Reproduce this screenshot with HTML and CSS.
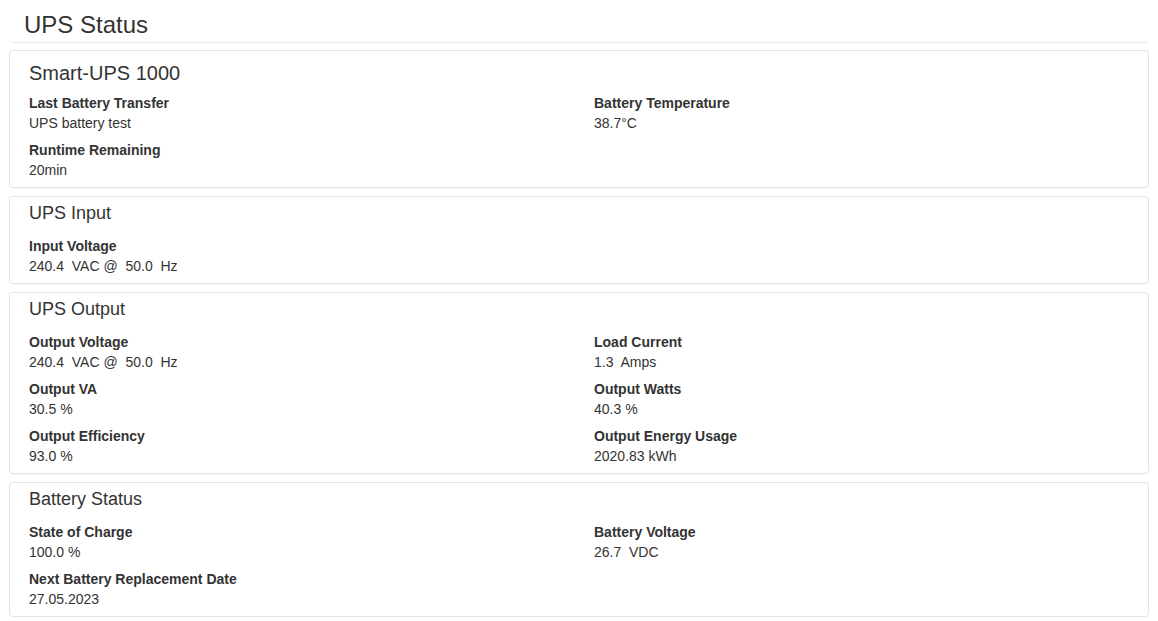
FILE: index.html
```html
<!DOCTYPE html>
<html>
<head>
<meta charset="utf-8">
<link rel="stylesheet" href="styles.css">
</head>
<body>
<div class="page">
  <div class="page-header"><h1>UPS Status</h1></div>

  <section class="card">
    <h2 class="card-title main">Smart-UPS 1000</h2>
    <div class="grid">
      <div class="item"><div class="label">Last Battery Transfer</div><div class="value">UPS battery test</div></div>
      <div class="item"><div class="label">Battery Temperature</div><div class="value">38.7°C</div></div>
      <div class="item"><div class="label">Runtime Remaining</div><div class="value">20min</div></div>
    </div>
  </section>

  <section class="card">
    <h2 class="card-title">UPS Input</h2>
    <div class="grid">
      <div class="item"><div class="label">Input Voltage</div><div class="value">240.4&nbsp; VAC @&nbsp; 50.0&nbsp; Hz</div></div>
    </div>
  </section>

  <section class="card">
    <h2 class="card-title">UPS Output</h2>
    <div class="grid">
      <div class="item"><div class="label">Output Voltage</div><div class="value">240.4&nbsp; VAC @&nbsp; 50.0&nbsp; Hz</div></div>
      <div class="item"><div class="label">Load Current</div><div class="value">1.3&nbsp; Amps</div></div>
      <div class="item"><div class="label">Output VA</div><div class="value">30.5 %</div></div>
      <div class="item"><div class="label">Output Watts</div><div class="value">40.3 %</div></div>
      <div class="item"><div class="label">Output Efficiency</div><div class="value">93.0 %</div></div>
      <div class="item"><div class="label">Output Energy Usage</div><div class="value">2020.83 kWh</div></div>
    </div>
  </section>

  <section class="card">
    <h2 class="card-title">Battery Status</h2>
    <div class="grid">
      <div class="item"><div class="label">State of Charge</div><div class="value">100.0 %</div></div>
      <div class="item"><div class="label">Battery Voltage</div><div class="value">26.7&nbsp; VDC</div></div>
      <div class="item"><div class="label">Next Battery Replacement Date</div><div class="value">27.05.2023</div></div>
    </div>
  </section>
</div>
</body>
</html>
```
FILE: styles.css
```css
html, body {
  margin: 0;
  padding: 0;
  background: #fff;
}
body {
  font-family: "Liberation Sans", Arial, sans-serif;
  font-size: 14px;
  line-height: 20px;
  color: #333;
}
.page {
  padding: 0 9px;
  display: flex;
  flex-direction: column;
  gap: 8px;
}
.page-header {
  margin: 0 0 -1px 1px;
  padding: 12px 14px 4px;
  border-bottom: 1px solid #eaeaea;
  border-radius: 0 0 4px 4px;
  box-shadow: 0 1px 1px rgba(0,0,0,0.02);
}
.page-header h1 {
  margin: 0;
  font-size: 24px;
  line-height: 26px;
  font-weight: normal;
}
.card {
  border: 1px solid #e3e3e3;
  border-radius: 4px;
  padding: 0 19px;
  box-shadow: 0 1px 1px rgba(0,0,0,0.03);
}
.card-title {
  margin: 6px 0 13px;
  font-size: 18px;
  line-height: 20px;
  font-weight: normal;
}
.card-title.main {
  margin: 11px 0 9px;
  font-size: 20px;
  line-height: 22px;
}
.grid {
  display: grid;
  grid-template-columns: 565px 1fr;
}
.item {
  margin-bottom: 7px;
}
.label {
  font-weight: bold;
}
```
